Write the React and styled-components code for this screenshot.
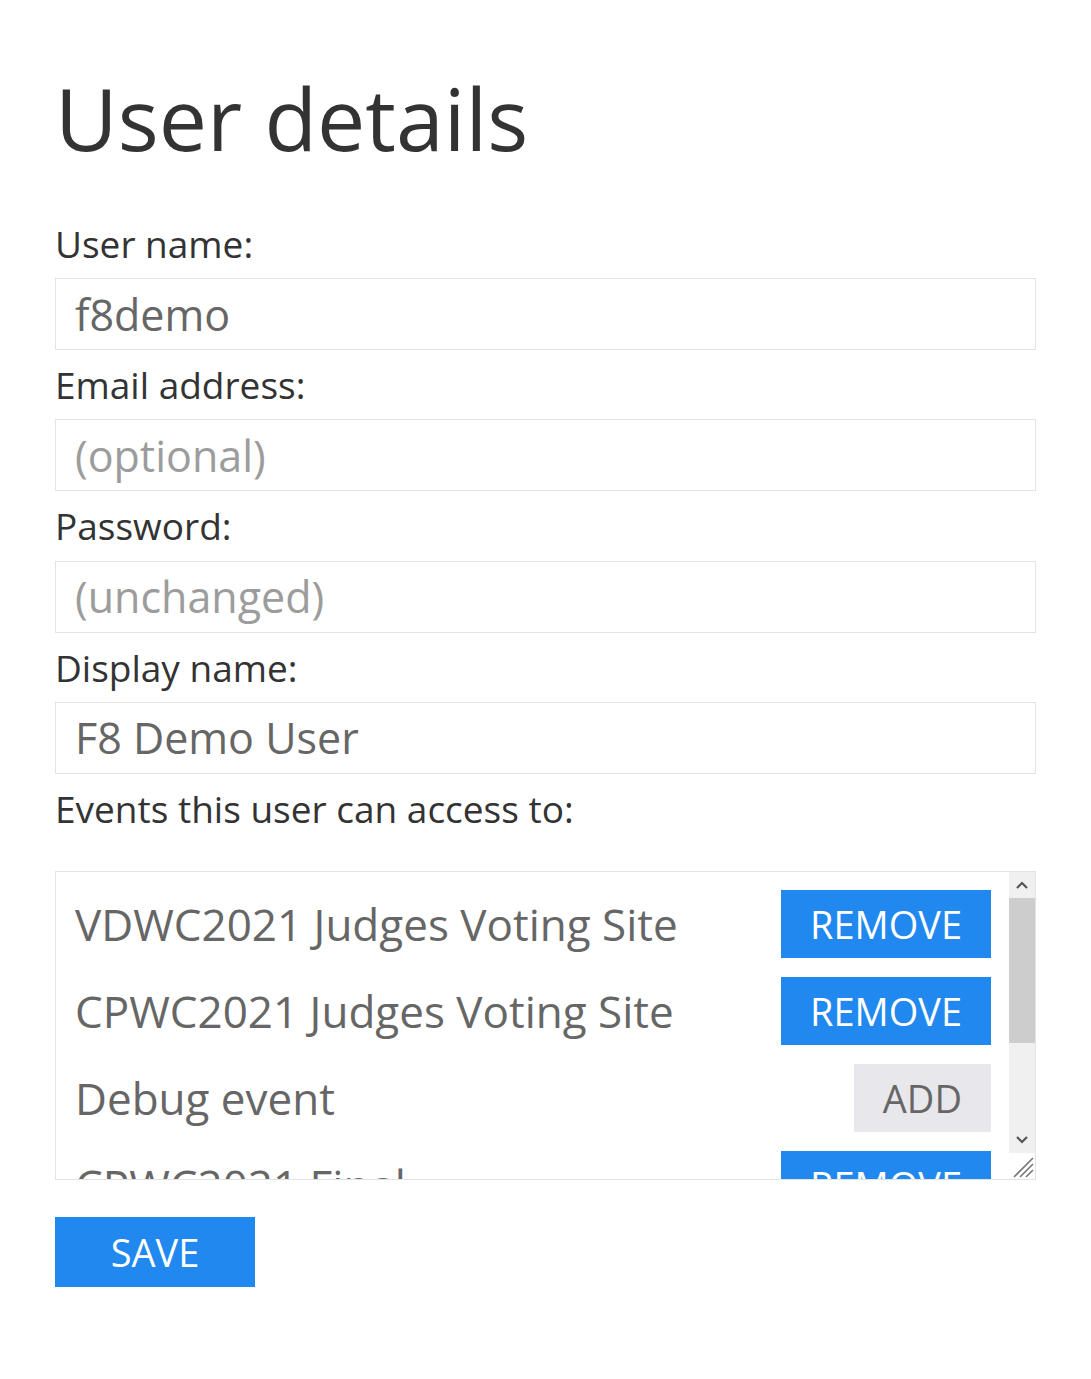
import styled, { createGlobalStyle } from "styled-components";

const GlobalStyle = createGlobalStyle`
  body {
    margin: 0;
    background: #fff;
    font-family: "Open Sans", "Noto Sans", sans-serif;
    color: #333;
  }
`;

const Page = styled.div`
  padding: 0 55px;
`;

const Title = styled.h1`
  font-size: 86px;
  font-weight: 400;
  line-height: 1;
  margin: 0;
  padding: 75px 0 48px;
  color: #333;
`;

const Label = styled.label`
  display: block;
  font-size: 37px;
  line-height: 69.2px;
  color: #333;
`;

const EventsLabel = styled(Label)`
  margin-bottom: 28px;
`;

const Input = styled.input`
  display: block;
  box-sizing: border-box;
  width: 100%;
  height: 72px;
  padding: 0 19px;
  border: 1px solid #e3e3e3;
  font-family: inherit;
  font-size: 43px;
  color: #666;
  outline: none;

  &::placeholder {
    color: #9c9c9c;
  }
`;

const EventsBox = styled.div`
  display: flex;
  height: 309px;
  border: 1px solid #e3e3e3;
  box-sizing: border-box;
`;

const EventList = styled.ul`
  flex: 1;
  list-style: none;
  margin: 0;
  padding: 18px 18px 0 19px;
  overflow: hidden;
`;

const EventRow = styled.li`
  display: flex;
  align-items: center;
  justify-content: space-between;
  height: 68px;
  margin-bottom: 19px;
`;

const EventName = styled.span`
  font-size: 44px;
  color: #666;
  white-space: nowrap;
`;

const ActionButton = styled.button`
  height: 68px;
  padding: 0 29px;
  border: none;
  font-family: inherit;
  font-size: 38px;
  text-transform: uppercase;
  background: ${(p) => (p.$active ? "#2088ee" : "#e8e7eb")};
  color: ${(p) => (p.$active ? "#fff" : "#666")};
  cursor: pointer;
`;

const ScrollBar = styled.div`
  width: 26px;
  display: flex;
  flex-direction: column;
`;

const ArrowCell = styled.div`
  height: 26px;
  background: #f0f0f0;
  display: flex;
  align-items: center;
  justify-content: center;
`;

const Thumb = styled.div`
  height: 145px;
  background: #cdcdcd;
`;

const Track = styled.div`
  flex: 1;
  background: #f0f0f0;
`;

const Grip = styled.div`
  height: 26px;
  background: #fff;
  display: flex;
  align-items: flex-end;
  justify-content: flex-end;
`;

const SaveButton = styled.button`
  margin-top: 37px;
  width: 200px;
  height: 70px;
  border: none;
  background: #2088ee;
  color: #fff;
  font-family: inherit;
  font-size: 38px;
  cursor: pointer;
`;

const Chevron = ({ up }) => (
  <svg width="14" height="10" viewBox="0 0 14 10">
    <path
      d={up ? "M2 8 L7 3 L12 8" : "M2 2 L7 7 L12 2"}
      fill="none"
      stroke="#555"
      strokeWidth="2.2"
    />
  </svg>
);

const events = [
  { name: "VDWC2021 Judges Voting Site", active: true },
  { name: "CPWC2021 Judges Voting Site", active: true },
  { name: "Debug event", active: false },
  { name: "CPWC2021 Final", active: true },
];

export default function App() {
  return (
    <Page>
      <GlobalStyle />
      <Title>User details</Title>
      <Label>User name:</Label>
      <Input defaultValue="f8demo" />
      <Label>Email address:</Label>
      <Input placeholder="(optional)" />
      <Label>Password:</Label>
      <Input type="password" placeholder="(unchanged)" />
      <Label>Display name:</Label>
      <Input defaultValue="F8 Demo User" />
      <EventsLabel>Events this user can access to:</EventsLabel>
      <EventsBox>
        <EventList>
          {events.map((ev) => (
            <EventRow key={ev.name}>
              <EventName>{ev.name}</EventName>
              <ActionButton $active={ev.active}>
                {ev.active ? "Remove" : "Add"}
              </ActionButton>
            </EventRow>
          ))}
        </EventList>
        <ScrollBar>
          <ArrowCell>
            <Chevron up />
          </ArrowCell>
          <Thumb />
          <Track />
          <ArrowCell>
            <Chevron />
          </ArrowCell>
          <Grip>
            <svg width="26" height="26" viewBox="0 0 26 26">
              <path
                d="M24 5 L5 24 M24 11 L11 24 M24 17 L17 24"
                stroke="#777"
                strokeWidth="1.6"
              />
            </svg>
          </Grip>
        </ScrollBar>
      </EventsBox>
      <SaveButton>SAVE</SaveButton>
    </Page>
  );
}
